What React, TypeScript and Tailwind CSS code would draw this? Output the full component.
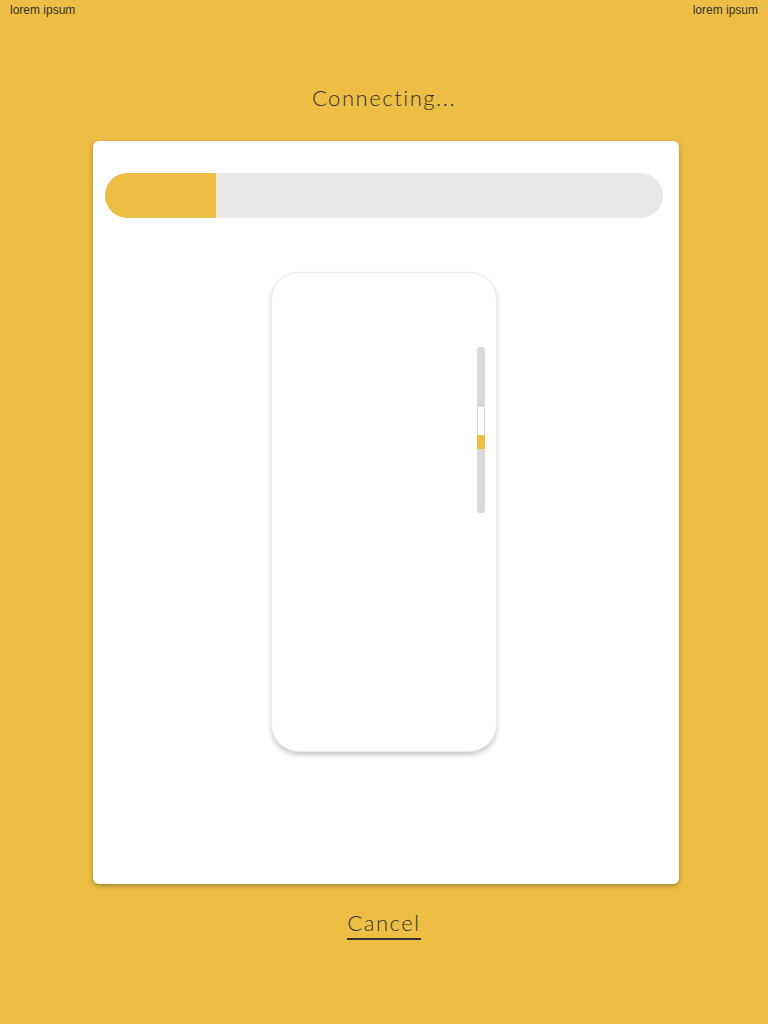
import React from 'react';

const App: React.FC = () => {
  const progress = 20;

  return (
    <div className="w-[768px] h-[1024px] bg-[#edbe44] flex flex-col font-['Liberation_Sans',Arial,sans-serif] text-[#333]">
      {/* ── Status row ─────────────────────────────── */}
      <div className="flex justify-between px-[10px] pt-[3px] h-[20px] text-[12px] leading-[14px] text-[#333]">
        <span>lorem ipsum</span>
        <span>lorem ipsum</span>
      </div>

      {/* ── Title ──────────────────────────────────── */}
      <div className="h-[121px] flex items-start justify-center pt-[63px]">
        <h1 className="font-['Lato',sans-serif] font-light text-[22px] leading-[30px] tracking-[0.07em] text-[#333]">
          Connecting...
        </h1>
      </div>

      {/* ── Card ───────────────────────────────────── */}
      <div className="ml-[93px] w-[586px] h-[743px] bg-white rounded-[6px] shadow-[0_2px_5px_rgba(0,0,0,0.3)] pt-[32px] pl-[12px] pr-[16px] flex flex-col">
        <div className="h-[45px] w-full rounded-full bg-[#e8e8e8] overflow-hidden flex">
          <div className="h-full bg-[#edbe44]" style={{ width: `${(558 * progress) / 100 - 1}px` }} />
        </div>

        <div className="mt-[54px] flex justify-center">
          <div className="w-[226px] h-[480px] bg-white rounded-[28px] border border-[#ececec] shadow-[0_3px_5px_rgba(0,0,0,0.22)] flex justify-end pt-[74px] pr-[11px]">
            <div className="w-[8px] h-[166px] rounded-[3px] bg-[#d9d9d9] flex flex-col overflow-hidden">
              <div className="h-[60px] shrink-0" />
              <div className="h-[28px] shrink-0 bg-white border-x border-[#d9d9d9]" />
              <div className="h-[14px] shrink-0 bg-[#edbe44]" />
            </div>
          </div>
        </div>
      </div>

      {/* ── Cancel ─────────────────────────────────── */}
      <div className="flex justify-center pt-[25px]">
        <button className="font-['Lato',sans-serif] font-light text-[22px] leading-[28px] tracking-[0.07em] text-[#333] border-b-2 border-[#333] pb-[1px]">
          Cancel
        </button>
      </div>
    </div>
  );
};

export default App;
